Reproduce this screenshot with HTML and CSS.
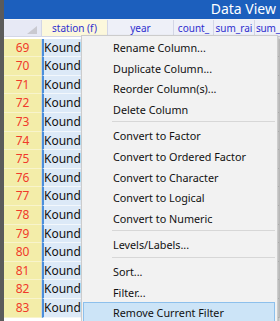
FILE: index.html
```html
<!DOCTYPE html>
<html>
<head>
  <title>Data View</title>
  <meta charset='utf-8'>
  <link rel="stylesheet" href="styles.css">
</head>
<body>

  <div class="window">
    <div class="frame"></div>
    <div class="main">
      <div class="titlebar">Data View</div>
      <div class="strip"></div>

      <div class="grid">
        <div class="head corner">
          <svg width="10" height="8" viewBox="0 0 10 8"><polygon points="10,0 10,8 0,8" fill="#c9c9d0"/></svg>
        </div>
        <div class="head head-sel">station (f)</div>
        <div class="head">year</div>
        <div class="head">count_</div>
        <div class="head">sum_rai</div>
        <div class="head head-last">sum_</div>

        <div class="num">69</div><div class="cell">Kounda</div><div class="blank"></div><div class="blank"></div><div class="blank"></div><div class="blank"></div>
        <div class="num">70</div><div class="cell">Kounda</div><div class="blank"></div><div class="blank"></div><div class="blank"></div><div class="blank"></div>
        <div class="num">71</div><div class="cell">Kounda</div><div class="blank"></div><div class="blank"></div><div class="blank"></div><div class="blank"></div>
        <div class="num">72</div><div class="cell">Kounda</div><div class="blank"></div><div class="blank"></div><div class="blank"></div><div class="blank"></div>
        <div class="num">73</div><div class="cell">Kounda</div><div class="blank"></div><div class="blank"></div><div class="blank"></div><div class="blank"></div>
        <div class="num">74</div><div class="cell">Kounda</div><div class="blank"></div><div class="blank"></div><div class="blank"></div><div class="blank"></div>
        <div class="num">75</div><div class="cell">Kounda</div><div class="blank"></div><div class="blank"></div><div class="blank"></div><div class="blank"></div>
        <div class="num">76</div><div class="cell">Kounda</div><div class="blank"></div><div class="blank"></div><div class="blank"></div><div class="blank"></div>
        <div class="num">77</div><div class="cell">Kounda</div><div class="blank"></div><div class="blank"></div><div class="blank"></div><div class="blank"></div>
        <div class="num">78</div><div class="cell">Kounda</div><div class="blank"></div><div class="blank"></div><div class="blank"></div><div class="blank"></div>
        <div class="num">79</div><div class="cell">Kounda</div><div class="blank"></div><div class="blank"></div><div class="blank"></div><div class="blank"></div>
        <div class="num">80</div><div class="cell">Kounda</div><div class="blank"></div><div class="blank"></div><div class="blank"></div><div class="blank"></div>
        <div class="num">81</div><div class="cell">Kounda</div><div class="blank"></div><div class="blank"></div><div class="blank"></div><div class="blank"></div>
        <div class="num">82</div><div class="cell">Kounda</div><div class="blank"></div><div class="blank"></div><div class="blank"></div><div class="blank"></div>
        <div class="num">83</div><div class="cell">Kounda</div><div class="blank"></div><div class="blank"></div><div class="blank"></div><div class="blank"></div>
      </div>
    </div>
  </div>

  <!-- context menu opened on the station column -->
  <ul class="menu">
    <li>Rename Column...</li>
    <li>Duplicate Column...</li>
    <li>Reorder Column(s)...</li>
    <li>Delete Column</li>
    <li class="sep"></li>
    <li>Convert to Factor</li>
    <li>Convert to Ordered Factor</li>
    <li>Convert to Character</li>
    <li>Convert to Logical</li>
    <li>Convert to Numeric</li>
    <li class="sep"></li>
    <li>Levels/Labels...</li>
    <li class="sep"></li>
    <li>Sort...</li>
    <li>Filter...</li>
    <li class="active">Remove Current Filter</li>
  </ul>

</body>
</html>
```

FILE: styles.css
```css
* {
  box-sizing: border-box;
}
html, body {
  height: 100%;
}
body {
  margin: 0;
  overflow: hidden;
  background: #fff;
  font-family: "Noto Sans", "Open Sans", sans-serif;
}
.window {
  display: flex;
  height: 100%;
}
.frame {
  width: 4px;
  flex: none;
  background: #5b5b5b;
}
.main {
  flex: 1;
  min-width: 0;
}
.titlebar {
  height: 19px;
  background: #1c5fbd;
  color: #fff;
  font-size: 14px;
  line-height: 18px;
  text-align: right;
  padding-right: 4px;
  white-space: nowrap;
}
.strip {
  height: 1px;
  background: #f4f4f4;
}
.grid {
  display: grid;
  grid-template-columns: 38px 66px 66px 40px 41px 1fr;
  grid-auto-rows: 18.6px;
}
.grid > div {
  white-space: nowrap;
  overflow: hidden;
}
.head {
  height: 17px;
  background: #eef0f8;
  border-right: 1px solid #d3d6e6;
  border-bottom: 1px solid #d3d6e6;
  color: #2f2fcf;
  font-size: 10px;
  line-height: 17px;
  text-align: center;
}
.corner {
  background: #e7e9f5;
  display: flex;
  align-items: flex-end;
  justify-content: flex-end;
  padding: 0 4px 2px 0;
}
.head-sel {
  background: #fcf8dc;
}
.head-last {
  text-align: left;
  padding-left: 1px;
  border-right: none;
  letter-spacing: -0.2px;
}
.num {
  background: #f3eda9;
  border-bottom: 1px solid #f8f4cc;
  border-right: 1px solid #d8d8d8;
  color: #f03a2a;
  font-size: 12px;
  line-height: 18px;
  text-align: center;
}
.cell {
  background: #dce9f7;
  border-left: 2px solid #4a8fdc;
  border-bottom: 1px solid #f2f7fc;
  color: #111;
  font-size: 12px;
  line-height: 18px;
}
.blank {
  border-right: 1px solid #e2e2e2;
  border-bottom: 1px solid #e2e2e2;
}
.menu {
  position: absolute;
  left: 81px;
  top: 35px;
  width: 197px;
  margin: 0;
  padding: 1px 2px 2px 1px;
  list-style: none;
  background: #f2f2f2;
  border: 1px solid #cccccc;
  box-shadow: 2px 2px 3px rgba(0, 0, 0, .3);
  font-size: 10.8px;
  color: #111;
}
.menu li {
  height: 20.6px;
  line-height: 20px;
  padding-left: 29px;
  border: 1px solid transparent;
  white-space: nowrap;
}
.menu .sep {
  height: 6px;
  border: none;
  padding: 0;
  margin-left: 29px;
  background: linear-gradient(#d7d7d7, #d7d7d7) no-repeat 0 2px / 100% 1px;
}
.menu .active {
  background: #cce4f7;
  border-color: #8dc0ec;
}
```
